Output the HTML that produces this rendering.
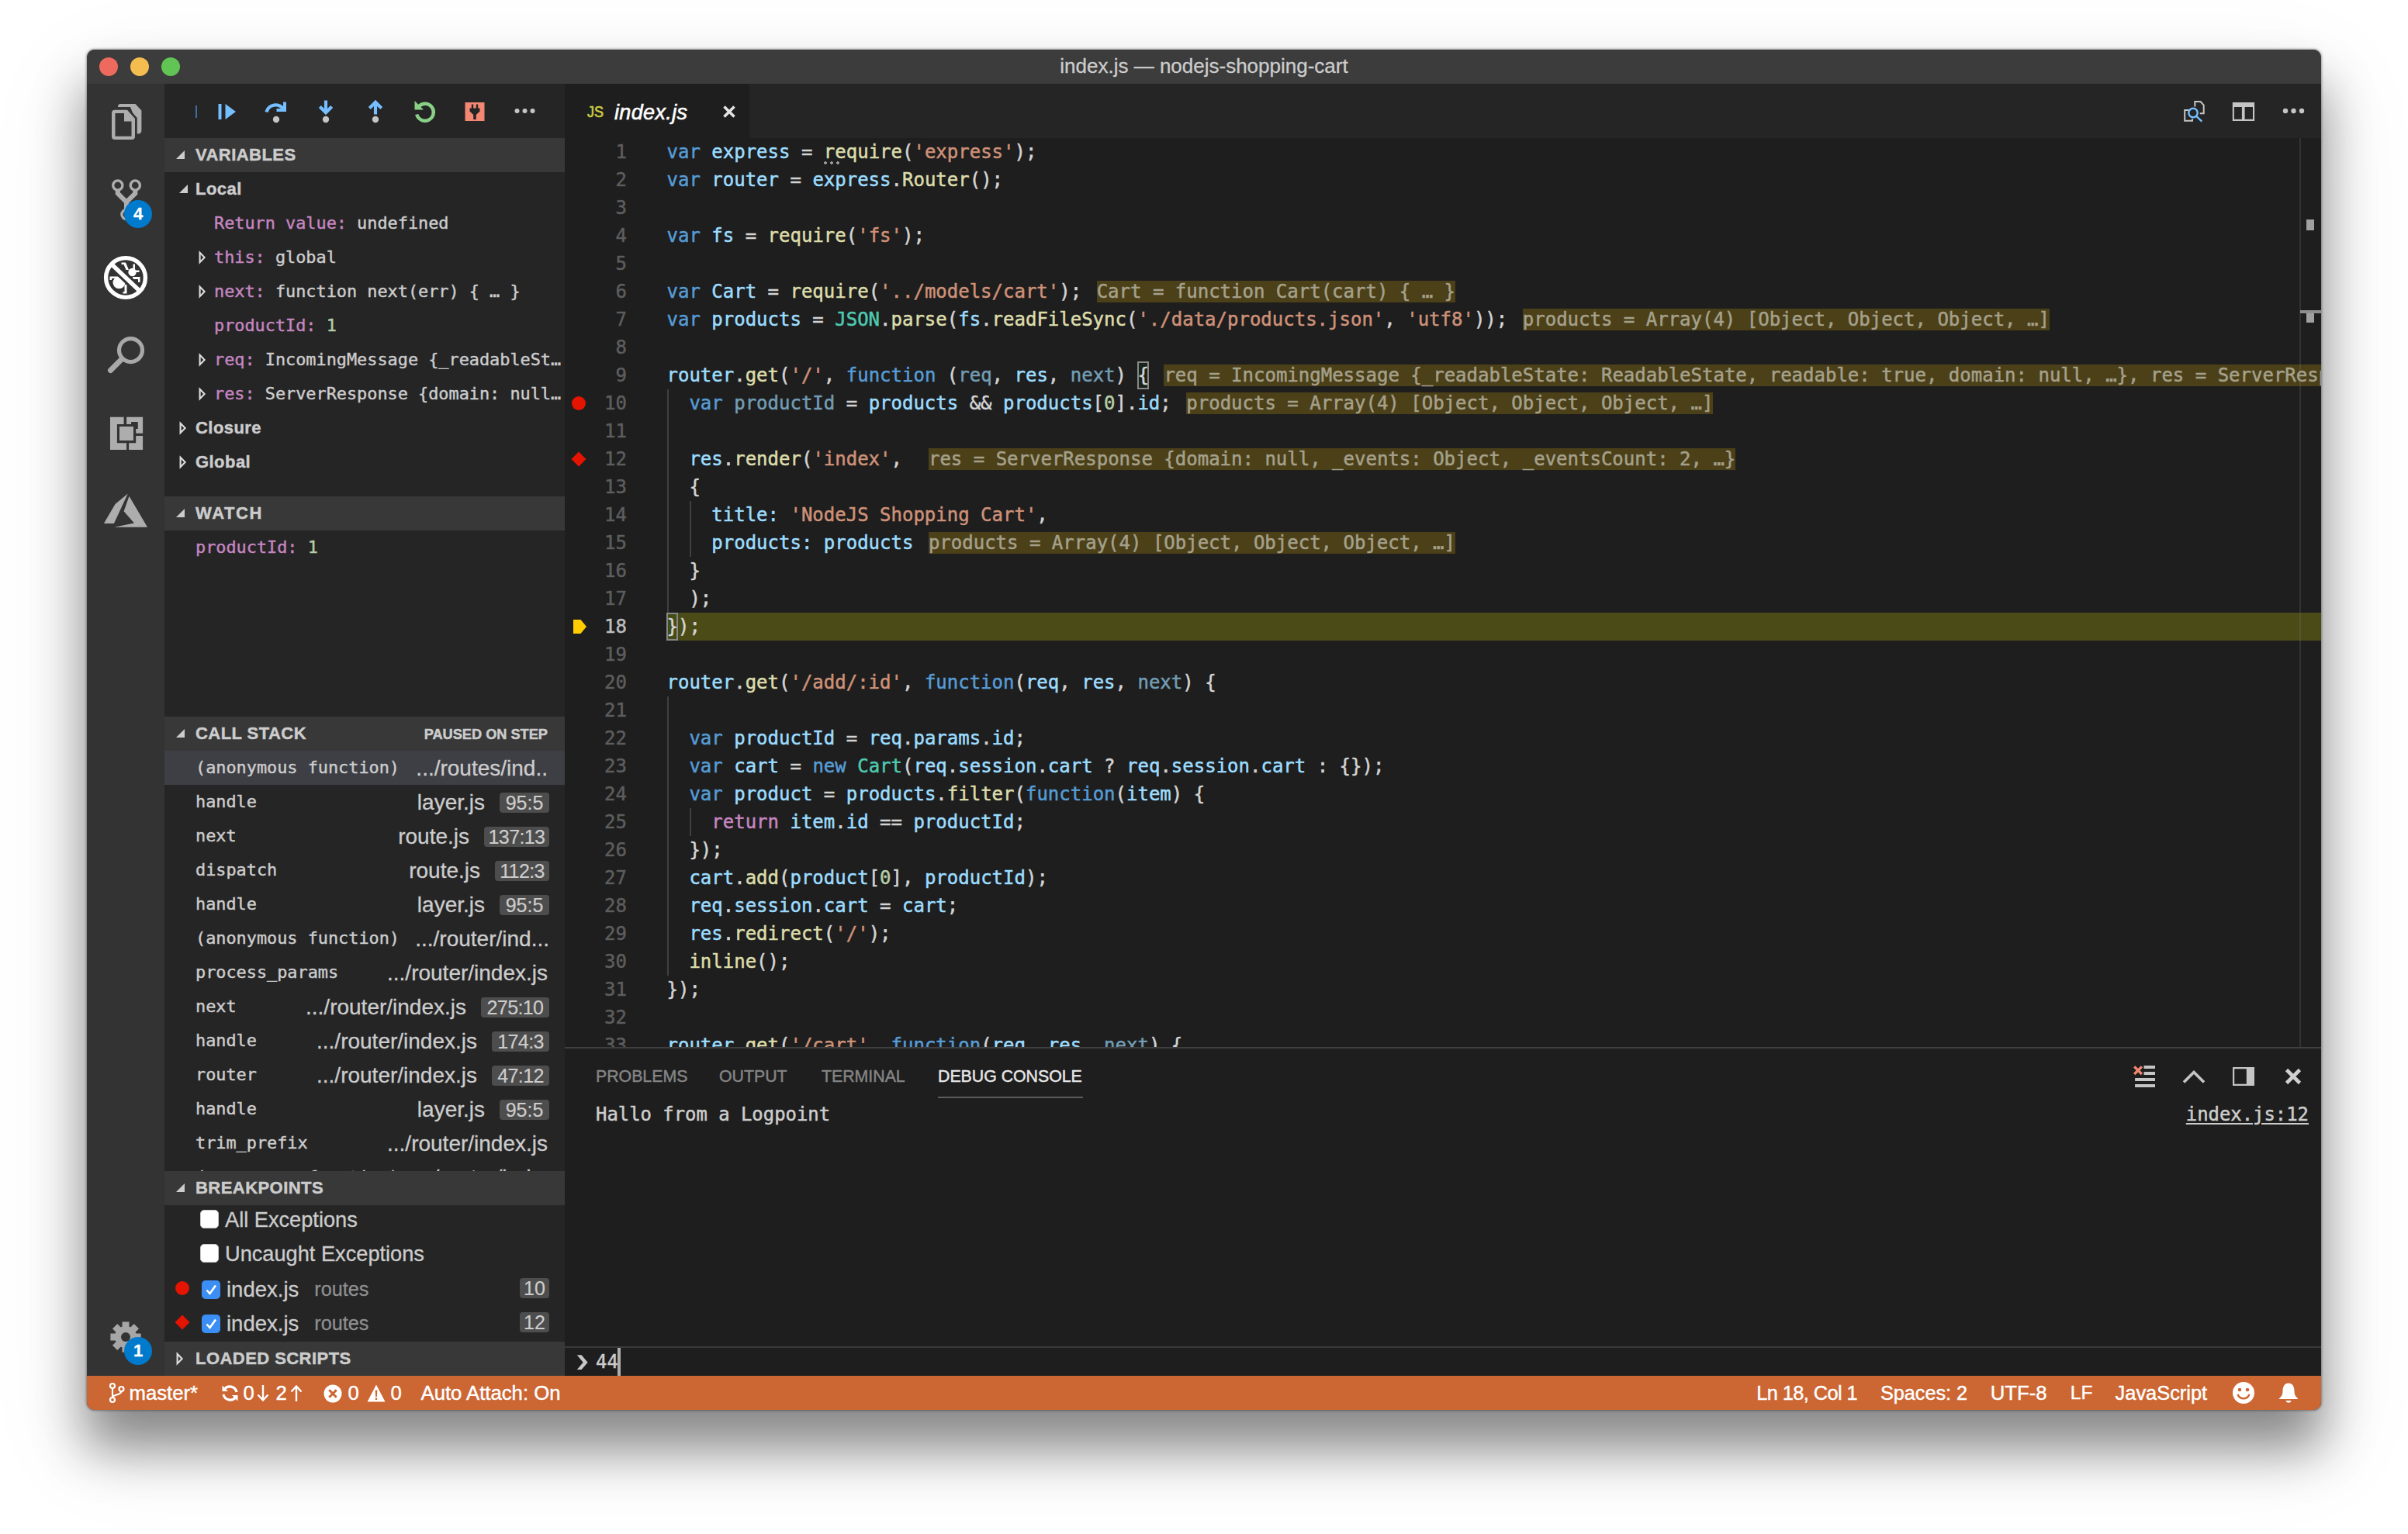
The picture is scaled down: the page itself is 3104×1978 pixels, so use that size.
<!DOCTYPE html>
<html lang="en">
<head>
<meta charset="utf-8">
<title>index.js — nodejs-shopping-cart</title>
<style>
*{box-sizing:border-box;margin:0;padding:0}
html,body{width:3104px;height:1978px;background:#fff;overflow:hidden}
body{position:relative;font-family:"Liberation Sans",sans-serif;color:#ccc;-webkit-text-stroke:.3px}
.win{position:absolute;left:112px;top:64px;width:2880px;height:1754px;border-radius:10px;overflow:hidden;background:#1e1e1e}
.shadow{position:absolute;left:112px;top:64px;width:2880px;height:1754px;border-radius:10px;
 box-shadow:0 48px 66px 2px rgba(0,0,0,.44),0 44px 130px 20px rgba(0,0,0,.06),0 0 3px 1px rgba(0,0,0,.35)}
.abs{position:absolute}
.mono{font-family:"DejaVu Sans Mono","Liberation Mono",monospace;-webkit-text-stroke:.5px}

/* title bar */
.titlebar{position:absolute;left:0;top:0;width:2880px;height:44px;background:#3c3c3c;text-align:center;line-height:43px;font-size:26px;color:#cccccc}
.tl{position:absolute;top:10px;width:24px;height:24px;border-radius:50%}

/* activity bar */
.activity{position:absolute;left:0;top:44px;width:100px;height:1666px;background:#333333}
.activity svg{position:absolute}
.badge{position:absolute;width:36px;height:36px;border-radius:50%;background:#007acc;color:#fff;font-size:22px;font-weight:bold;text-align:center;line-height:36px}

/* sidebar */
.sidebar{position:absolute;left:100px;top:44px;width:516px;height:1666px;background:#252526;overflow:hidden}
.hdr{position:absolute;left:0;width:516px;height:44px;background:#383838;font-size:22px;font-weight:bold;color:#cccccc;line-height:44px;padding-left:40px;letter-spacing:.45px;-webkit-text-stroke:.45px}
.row{position:absolute;left:0;width:516px;height:44px;line-height:44px;white-space:nowrap;overflow:hidden}
.vm{font-family:"DejaVu Sans Mono","Liberation Mono",monospace;font-size:21.85px;color:#cccccc;-webkit-text-stroke:.42px}
.vn{color:#c586c0}
.num{color:#b5cea8}
.scope{font-size:22px;font-weight:bold;color:#cccccc;letter-spacing:.45px;-webkit-text-stroke:.45px}
.tw{position:absolute}
.cs-file{position:absolute;top:0;font-family:"Liberation Sans",sans-serif;font-size:28px;-webkit-text-stroke:.3px;color:#cccccc;line-height:45px;white-space:nowrap}
.cs-badge{position:absolute;font-family:"Liberation Sans",sans-serif;-webkit-text-stroke:.2px;text-align:center;right:20px;top:10px;height:26px;border-radius:4px;background:#4d4d4d;color:#cccccc;font-size:25px;line-height:27px;padding:0 7px}

/* editor */
.tabs{position:absolute;left:616px;top:44px;width:2264px;height:70px;background:#252526}
.tab{position:absolute;left:0;top:0;width:238px;height:70px;background:#1e1e1e}
.editor{position:absolute;left:616px;top:114px;width:2264px;height:1172px;background:#1e1e1e;overflow:hidden}
.ln{position:absolute;left:0;width:80px;text-align:right;height:36px;line-height:36px;font-size:24px;color:#5d5d5d}
.cl{position:absolute;left:131.500px;height:36px;line-height:36px;font-size:24px;white-space:pre;color:#d4d4d4}
.k{color:#569cd6}.v{color:#9cdcfe}.f{color:#dcdcaa}.s{color:#ce9178}.n{color:#b5cea8}.t{color:#4ec9b0}.c{color:#c586c0}.u{color:#729db4}
.iv{margin-left:19.500px;background:#4b4018;color:#a5a08c}
.guide{position:absolute;width:2px;background:#404040}
.bm{position:absolute;width:15px;height:36px;border:2px solid #888;background:rgba(0,100,0,.1)}

/* panel */
.panel{position:absolute;left:616px;top:1286px;width:2264px;height:424px;background:#1e1e1e;border-top:2px solid #3f3f3f}
.ptab{position:absolute;top:0;height:70px;line-height:72px;font-size:21.3px;color:#858585;white-space:nowrap;-webkit-text-stroke:.45px}

/* status bar */
.status{position:absolute;left:0;top:1710px;width:2880px;height:44px;background:#cc6633;color:#fff;font-size:25.7px;line-height:44px;-webkit-text-stroke:.45px;white-space:nowrap}
.status span,.status svg{position:absolute;top:0}
</style>
</head>
<body>
<div class="shadow"></div>
<div class="win">

<!-- TITLE BAR -->
<div class="titlebar">index.js — nodejs-shopping-cart
 <div class="tl" style="left:16px;background:#ee6a5f"></div>
 <div class="tl" style="left:56px;background:#f5bd4f"></div>
 <div class="tl" style="left:96px;background:#61c454"></div>
</div>

<!-- ACTIVITY BAR -->
<div class="activity">
<!-- explorer -->
<svg style="left:26px;top:20px" width="52" height="58" viewBox="26 20 52 58">
 <path d="M43 26 H62.500 L70.400 34.500 V60 Q70.400 64.500 66 64.500 H60 V40 L56 30 H40 Q40 26 43 26 Z" fill="#adadad"/>
 <path d="M36 33.700 H52 L62 45 V68 Q62 72 58 72 H36 Q32 72 32 68 V37.700 Q32 33.700 36 33.700 Z" fill="#333" stroke="#333" stroke-width="5.500"/>
 <path d="M36 33.700 H52 L62 45 V68 Q62 72 58 72 H36 Q32 72 32 68 V37.700 Q32 33.700 36 33.700 Z M36.500 38 V67.700 H57.500 V48.500 H48 V38 Z" fill="#adadad" fill-rule="evenodd"/>
</svg>
<!-- git -->
<svg style="left:26px;top:118px" width="52" height="64" viewBox="26 118 52 64">
 <g fill="none" stroke="#adadad">
 <circle cx="39.800" cy="131" r="6.100" stroke-width="3.400"/>
 <circle cx="62.300" cy="131" r="6.100" stroke-width="3.400"/>
 <circle cx="51" cy="168.500" r="6.100" stroke-width="3.400"/>
 <path d="M39.800 137 V141.500 L51 152.500 L62.300 141.500 V137 M51 152 V162.500" stroke-width="6"/>
 </g>
</svg>
<div class="badge" style="left:48px;top:150px">4</div>
<!-- debug (active) -->
<svg style="left:20px;top:220px" width="60" height="60" viewBox="-30 -30 60 60">
 <g fill="#fff">
  <ellipse cx="-8.500" cy="6.500" rx="8" ry="7.800"/>
  <path d="M-20.500 -1.500 H-9 V1 H-18 V3 H-20.500 Z"/>
  <path d="M-1.500 9 H1.500 V20.500 H-3.500 V18 H-1.500 Z"/>
  <circle cx="8.500" cy="-7" r="5.200"/>
  <path d="M-5.500 -19.500 H0 L4 -10 H0.500 L-2.500 -17 H-5.500 Z"/>
  <path d="M9.500 -17.500 H12 V-11 H9.500 Z M12 -9.500 H17.500 V-7 H12 Z"/>
  <path d="M9 -1 H18.500 V6 H16 V2 H9 Z"/>
 </g>
 <path d="M-20 -19 L20 19" stroke="#333" stroke-width="11.500" />
 <path d="M-20 -19 L20 19" stroke="#fff" stroke-width="5.400"/>
 <circle cx="0" cy="0" r="28.200" fill="none" stroke="#333" stroke-width="4"/>
 <circle cx="0" cy="0" r="25.400" fill="none" stroke="#fff" stroke-width="5.400"/>
</svg>
<!-- search -->
<svg style="left:22px;top:320px" width="58" height="58" viewBox="22 320 58 58">
 <circle cx="56.500" cy="343.600" r="15" fill="none" stroke="#a8a8a8" stroke-width="5.200"/>
 <path d="M45 355 L30.500 369.500" stroke="#a8a8a8" stroke-width="7" stroke-linecap="round"/>
</svg>
<!-- extensions -->
<svg style="left:30px;top:429px" width="43" height="44" viewBox="30 429 43 44">
 <path d="M30 429.700 H47.600 V438.900 H38.900 V463.200 H51.100 V472 H30 Z" fill="#adadad"/>
 <path d="M51.100 429.700 H72.100 V450.800 H63.200 V445 H65.800 V435.900 H57.100 V438.900 H51.100 Z" fill="#adadad"/>
 <path d="M63.200 454.100 H72.100 V472 H54.100 V463.200 H63.200 Z" fill="#adadad"/>
 <rect x="42" y="442" width="18" height="18" fill="#adadad"/>
</svg>
<!-- azure -->
<svg style="left:20px;top:526px" width="60" height="48" viewBox="20 526 60 48">
 <path d="M52.800 528.400 L36.500 542.100 L21.900 566.900 H34.900 Z" fill="#adadad"/>
 <path d="M54.500 531.700 L47.600 551.200 L61 566.600 L35.200 571.800 H78 Z" fill="#adadad"/>
</svg>
<!-- gear -->
<svg style="left:28px;top:1594px" width="44" height="44" viewBox="-22 -22 44 44">
 <g fill="#a6a6a6">
  <circle r="14"/>
  <g id="teeth"><rect x="-4.500" y="-19.600" width="9" height="39.200" /><rect x="-4.500" y="-19.600" width="9" height="39.200" transform="rotate(45)"/><rect x="-4.500" y="-19.600" width="9" height="39.200" transform="rotate(90)"/><rect x="-4.500" y="-19.600" width="9" height="39.200" transform="rotate(135)"/></g>
 </g>
 <circle r="6" fill="#333"/>
</svg>
<div class="badge" style="left:48px;top:1616px">1</div>

</div>

<!-- SIDEBAR -->
<div class="sidebar">
<!-- debug toolbar -->
<div class="abs" style="left:40px;top:28px;width:2px;height:16px;background:#3f6f9f"></div>
<svg class="abs" style="left:64px;top:20px" width="32" height="32" viewBox="0 0 32 32"><path d="M5.5 6 H9.5 V26 H5.5 Z M14.5 6 L28 16 L14.5 26 Z" fill="#75beff"/></svg>
<svg class="abs" style="left:128px;top:20px" width="32" height="32" viewBox="0 0 32 32"><path d="M3.500 16.500 A12 11.500 0 0 1 25.500 13" fill="none" stroke="#75beff" stroke-width="4.400"/><path d="M29 3.500 V16 H16.500 V12 H25 V3.500 Z" fill="#75beff"/><circle cx="16" cy="26" r="4.200" fill="#c5c5c5"/></svg>
<svg class="abs" style="left:192px;top:20px" width="32" height="32" viewBox="0 0 32 32"><path d="M16 1.500 V16 M8.300 9.500 L16 17.200 L23.700 9.500" fill="none" stroke="#75beff" stroke-width="4.200"/><circle cx="16" cy="26" r="4.200" fill="#c5c5c5"/></svg>
<svg class="abs" style="left:256px;top:20px" width="32" height="32" viewBox="0 0 32 32"><path d="M16 19.500 V5 M8.300 11.500 L16 3.800 L23.700 11.500" fill="none" stroke="#75beff" stroke-width="4.200"/><circle cx="16" cy="26" r="4.200" fill="#c5c5c5"/></svg>
<svg class="abs" style="left:320px;top:20px" width="32" height="32" viewBox="0 0 32 32"><path d="M8 9 A11 11 0 1 1 5.200 19.500" fill="none" stroke="#89d185" stroke-width="4.400"/><path d="M2.500 2 V13.500 H14 L10.500 10 L7 6.500 Z" fill="#89d185"/></svg>
<svg class="abs" style="left:384px;top:20px" width="32" height="32" viewBox="0 0 32 32"><rect x="3.500" y="4" width="25" height="24" fill="#f48771"/><path d="M11.800 6.500 h2.400 v5 h3.600 v-5 h2.400 v5 h2.300 v4 l-4.700 4.500 v6 h-3.600 v-6 l-4.700 -4.500 v-4 h2.300 Z" fill="#252526"/></svg>
<svg class="abs" style="left:448px;top:20px" width="32" height="32" viewBox="0 0 32 32"><circle cx="6.500" cy="15" r="3" fill="#c5c5c5"/><circle cx="16.500" cy="15" r="3" fill="#c5c5c5"/><circle cx="26.500" cy="15" r="3" fill="#c5c5c5"/></svg>

<!-- VARIABLES -->
<div class="hdr" style="top:70px"><svg class="tw" style="left:14px;top:15px" width="13" height="13" viewBox="0 0 13 13"><path d="M12 1 V12 H1 Z" fill="#cccccc"/></svg>VARIABLES</div>
<div class="row scope" style="top:114px;padding-left:40px"><svg class="tw" style="left:18px;top:15px" width="13" height="13" viewBox="0 0 13 13"><path d="M12 1 V12 H1 Z" fill="#cccccc"/></svg>Local</div>
<div class="row vm" style="top:158px;padding-left:64px"><span class="vn">Return value:</span> undefined</div>
<div class="row vm" style="top:202px;padding-left:64px"><svg class="tw" style="left:43.600px;top:13px" width="10" height="18" viewBox="0 0 10 18"><path d="M1.600 2.800 L7.600 9 L1.600 15.200 Z" fill="none" stroke="#dddddd" stroke-width="2.100"/></svg><span class="vn">this:</span> global</div>
<div class="row vm" style="top:246px;padding-left:64px"><svg class="tw" style="left:43.600px;top:13px" width="10" height="18" viewBox="0 0 10 18"><path d="M1.600 2.800 L7.600 9 L1.600 15.200 Z" fill="none" stroke="#dddddd" stroke-width="2.100"/></svg><span class="vn">next:</span> function next(err) { … }</div>
<div class="row vm" style="top:290px;padding-left:64px"><span class="vn">productId:</span> <span class="num">1</span></div>
<div class="row vm" style="top:334px;padding-left:64px"><svg class="tw" style="left:43.600px;top:13px" width="10" height="18" viewBox="0 0 10 18"><path d="M1.600 2.800 L7.600 9 L1.600 15.200 Z" fill="none" stroke="#dddddd" stroke-width="2.100"/></svg><span class="vn">req:</span> IncomingMessage {_readableSt…</div>
<div class="row vm" style="top:378px;padding-left:64px"><svg class="tw" style="left:43.600px;top:13px" width="10" height="18" viewBox="0 0 10 18"><path d="M1.600 2.800 L7.600 9 L1.600 15.200 Z" fill="none" stroke="#dddddd" stroke-width="2.100"/></svg><span class="vn">res:</span> ServerResponse {domain: null…</div>
<div class="row scope" style="top:422px;padding-left:40px"><svg class="tw" style="left:19.300px;top:13px" width="10" height="18" viewBox="0 0 10 18"><path d="M1.600 2.800 L7.600 9 L1.600 15.200 Z" fill="none" stroke="#dddddd" stroke-width="2.100"/></svg>Closure</div>
<div class="row scope" style="top:466px;padding-left:40px"><svg class="tw" style="left:19.300px;top:13px" width="10" height="18" viewBox="0 0 10 18"><path d="M1.600 2.800 L7.600 9 L1.600 15.200 Z" fill="none" stroke="#dddddd" stroke-width="2.100"/></svg>Global</div>

<!-- WATCH -->
<div class="hdr" style="top:532px"><svg class="tw" style="left:14px;top:15px" width="13" height="13" viewBox="0 0 13 13"><path d="M12 1 V12 H1 Z" fill="#cccccc"/></svg><span style="letter-spacing:1.600px">WATCH</span></div>
<div class="row vm" style="top:576px;padding-left:40px"><span class="vn">productId:</span> <span class="num">1</span></div>

<!-- CALL STACK -->
<div class="hdr" style="top:816px"><svg class="tw" style="left:14px;top:15px" width="13" height="13" viewBox="0 0 13 13"><path d="M12 1 V12 H1 Z" fill="#cccccc"/></svg>CALL STACK<span class="abs" style="right:22px;top:1px;font-size:18.2px;letter-spacing:0">PAUSED ON STEP</span></div>
<div class="row vm" style="top:860px;padding-left:40px;background:#3e3f45">(anonymous function)<span class="cs-file" style="right:22px">.../routes/ind..</span></div>
<div class="row vm" style="top:904px;padding-left:40px">handle<span class="cs-file" style="right:103px">layer.js</span><span class="cs-badge" style="width:64px;padding:0">95:5</span></div>
<div class="row vm" style="top:948px;padding-left:40px">next<span class="cs-file" style="right:123px">route.js</span><span class="cs-badge" style="width:84px;padding:0;letter-spacing:-.6px">137:13</span></div>
<div class="row vm" style="top:992px;padding-left:40px">dispatch<span class="cs-file" style="right:109px">route.js</span><span class="cs-badge" style="width:70px;padding:0;letter-spacing:-.6px">112:3</span></div>
<div class="row vm" style="top:1036px;padding-left:40px">handle<span class="cs-file" style="right:103px">layer.js</span><span class="cs-badge" style="width:64px;padding:0">95:5</span></div>
<div class="row vm" style="top:1080px;padding-left:40px">(anonymous function)<span class="cs-file" style="right:20px">.../router/ind...</span></div>
<div class="row vm" style="top:1124px;padding-left:40px">process_params<span class="cs-file" style="right:22px">.../router/index.js</span></div>
<div class="row vm" style="top:1168px;padding-left:40px">next<span class="cs-file" style="right:127px">.../router/index.js</span><span class="cs-badge" style="width:88px;padding:0;letter-spacing:-.6px">275:10</span></div>
<div class="row vm" style="top:1212px;padding-left:40px">handle<span class="cs-file" style="right:113px">.../router/index.js</span><span class="cs-badge" style="width:74px;padding:0;letter-spacing:-.6px">174:3</span></div>
<div class="row vm" style="top:1256px;padding-left:40px">router<span class="cs-file" style="right:113px">.../router/index.js</span><span class="cs-badge" style="width:74px;padding:0;letter-spacing:-.6px">47:12</span></div>
<div class="row vm" style="top:1300px;padding-left:40px">handle<span class="cs-file" style="right:103px">layer.js</span><span class="cs-badge" style="width:64px;padding:0">95:5</span></div>
<div class="row vm" style="top:1344px;padding-left:40px">trim_prefix<span class="cs-file" style="right:22px">.../router/index.js</span></div>
<div class="row vm" style="top:1388px;padding-left:40px">(anonymous function)<span class="cs-file" style="right:20px">.../router/ind...</span></div>

<!-- BREAKPOINTS -->
<div class="hdr" style="top:1402px"><svg class="tw" style="left:14px;top:15px" width="13" height="13" viewBox="0 0 13 13"><path d="M12 1 V12 H1 Z" fill="#cccccc"/></svg>BREAKPOINTS</div>
<div class="abs" style="left:0;top:1446px;width:516px;height:176px;background:#252526"></div>
<div class="row" style="top:1446px;padding-left:78px;font-size:27.2px;color:#cccccc;line-height:38px"><span class="abs" style="left:46px;top:6px;width:24px;height:24px;border-radius:5px;background:#fff;border:1px solid #c8c8c8"></span>All Exceptions</div>
<div class="row" style="top:1490px;padding-left:78px;font-size:27.2px;color:#cccccc;line-height:38px"><span class="abs" style="left:46px;top:6px;width:24px;height:24px;border-radius:5px;background:#fff;border:1px solid #c8c8c8"></span>Uncaught Exceptions</div>
<div class="row" style="top:1534px;padding-left:80px;font-size:27.5px;color:#cccccc;line-height:41px"><span class="abs" style="left:14px;top:10px;width:18px;height:18px;border-radius:50%;background:#e51400"></span><svg class="abs" style="left:48px;top:8.5px" width="24" height="24" viewBox="0 0 24 24"><rect width="24" height="24" rx="5" fill="#3b8ef3"/><path d="M6.500 12.500 L10.500 17 L18 6.500" fill="none" stroke="#fff" stroke-width="2.600"/></svg>index.js<span style="font-size:25.2px;color:#8f8f8f;margin-left:20px;position:relative;top:-1.5px">routes</span><span class="cs-badge" style="top:6px;width:38px;padding:0;line-height:27px">10</span></div>
<div class="row" style="top:1578px;padding-left:80px;font-size:27.5px;color:#cccccc;line-height:41px"><svg class="abs" style="left:13px;top:9px" width="20" height="20" viewBox="0 0 20 20"><path d="M10 0.5 L19.500 10 L10 19.500 L0.500 10 Z" fill="#e51400"/></svg><svg class="abs" style="left:48px;top:8.5px" width="24" height="24" viewBox="0 0 24 24"><rect width="24" height="24" rx="5" fill="#3b8ef3"/><path d="M6.500 12.500 L10.500 17 L18 6.500" fill="none" stroke="#fff" stroke-width="2.600"/></svg>index.js<span style="font-size:25.2px;color:#8f8f8f;margin-left:20px;position:relative;top:-1.5px">routes</span><span class="cs-badge" style="top:6px;width:38px;padding:0;line-height:27px">12</span></div>

<!-- LOADED SCRIPTS -->
<div class="hdr" style="top:1622px"><svg class="tw" style="left:15px;top:13px" width="10" height="18" viewBox="0 0 10 18"><path d="M1.600 2.800 L7.600 9 L1.600 15.200 Z" fill="none" stroke="#dddddd" stroke-width="2.100"/></svg>LOADED SCRIPTS</div>

</div>

<!-- TABS -->
<div class="tabs">
<div class="tab">
  <span class="abs" style="left:29px;top:0;line-height:73px;font-size:20px;font-weight:normal;-webkit-text-stroke:.7px;color:#cbcb41;transform:scaleX(.9);transform-origin:left">JS</span>
 <span class="abs" style="left:64px;top:0;line-height:74px;font-size:27px;font-style:italic;color:#ffffff;letter-spacing:.35px;-webkit-text-stroke:.55px">index.js</span>
 <svg class="abs" style="left:202px;top:26px" width="20" height="20" viewBox="0 0 20 20"><path d="M3.500 3.500 L16.500 16.500 M16.500 3.500 L3.500 16.500" stroke="#e4e4e4" stroke-width="3.600"/></svg>
</div>
<!-- editor actions -->
<svg class="abs" style="left:2084px;top:20px" width="32" height="32" viewBox="0 0 32 32">
 <path d="M17.300 9.400 V3.100 H24.600 L28.700 7.600 V18.300 H23.700" fill="none" stroke="#c5c5c5" stroke-width="2"/>
 <path d="M11.300 14.100 H4.200 V27.700 H14 V25.300" fill="none" stroke="#c5c5c5" stroke-width="2"/>
 <circle cx="15" cy="17.500" r="5.700" fill="none" stroke="#75beff" stroke-width="2.400"/>
 <path d="M19.300 21.800 L26.300 28.700" stroke="#75beff" stroke-width="2.400"/>
</svg>
<svg class="abs" style="left:2149px;top:24px" width="30" height="26" viewBox="0 0 30 26"><path d="M0.800 0.100 H29.100 V24 H0.800 Z M2.900 6 V21.800 H12.900 V6 Z M16.600 6 V21.800 H27 V6 Z" fill="#c5c5c5" fill-rule="evenodd"/></svg>
<svg class="abs" style="left:2214px;top:30px" width="30" height="10" viewBox="0 0 30 10"><circle cx="4" cy="5" r="3.200" fill="#c5c5c5"/><circle cx="14.500" cy="5" r="3.200" fill="#c5c5c5"/><circle cx="25" cy="5" r="3.200" fill="#c5c5c5"/></svg>

</div>

<!-- EDITOR -->
<div class="editor mono">
<!-- current line highlight -->
<div class="abs" style="left:132px;top:612px;width:2132px;height:36px;background:#4b4b18"></div>
<!-- indent guides -->
<div class="guide" style="left:132px;top:324px;height:288px"></div>
<div class="guide" style="left:161px;top:468px;height:72px"></div>
<div class="guide" style="left:132px;top:720px;height:360px"></div>
<div class="guide" style="left:161px;top:864px;height:36px"></div>
<!-- bracket match -->
<div class="bm" style="left:738px;top:288px"></div>
<div class="bm" style="left:131px;top:612px"></div>
<!-- glyph margin -->
<div class="abs" style="left:9px;top:333px;width:18px;height:18px;border-radius:50%;background:#e51400"></div>
<svg class="abs" style="left:8px;top:404px" width="20" height="20" viewBox="0 0 20 20"><path d="M10 0.5 L19.5 10 L10 19.5 L0.5 10 Z" fill="#e51400"/></svg>
<svg class="abs" style="left:10px;top:621px" width="19" height="18" viewBox="0 0 19 18"><path d="M1 0 H10.500 L18 9 L10.500 18 H1 Z" fill="#ffcc00"/></svg>
<!-- lightbulb hint dots under require -->
<div class="abs" style="left:334px;top:30px;width:22px;height:4px;background:radial-gradient(circle 1.7px at 2px 2px,#9a9a9a 98%,transparent) 0 0/8px 4px repeat-x"></div>
<!-- line numbers -->
<div class="ln" style="top:0">1</div>
<div class="ln" style="top:36px">2</div>
<div class="ln" style="top:72px">3</div>
<div class="ln" style="top:108px">4</div>
<div class="ln" style="top:144px">5</div>
<div class="ln" style="top:180px">6</div>
<div class="ln" style="top:216px">7</div>
<div class="ln" style="top:252px">8</div>
<div class="ln" style="top:288px">9</div>
<div class="ln" style="top:324px">10</div>
<div class="ln" style="top:360px">11</div>
<div class="ln" style="top:396px">12</div>
<div class="ln" style="top:432px">13</div>
<div class="ln" style="top:468px">14</div>
<div class="ln" style="top:504px">15</div>
<div class="ln" style="top:540px">16</div>
<div class="ln" style="top:576px">17</div>
<div class="ln" style="top:612px;color:#bdbdbd">18</div>
<div class="ln" style="top:648px">19</div>
<div class="ln" style="top:684px">20</div>
<div class="ln" style="top:720px">21</div>
<div class="ln" style="top:756px">22</div>
<div class="ln" style="top:792px">23</div>
<div class="ln" style="top:828px">24</div>
<div class="ln" style="top:864px">25</div>
<div class="ln" style="top:900px">26</div>
<div class="ln" style="top:936px">27</div>
<div class="ln" style="top:972px">28</div>
<div class="ln" style="top:1008px">29</div>
<div class="ln" style="top:1044px">30</div>
<div class="ln" style="top:1080px">31</div>
<div class="ln" style="top:1116px">32</div>
<div class="ln" style="top:1152px">33</div>
<!-- code -->
<div class="cl" style="top:0"><span class="k">var</span> <span class="v">express</span> = <span class="f">require</span>(<span class="s">'express'</span>);</div>
<div class="cl" style="top:36px"><span class="k">var</span> <span class="v">router</span> = <span class="v">express</span>.<span class="f">Router</span>();</div>
<div class="cl" style="top:108px"><span class="k">var</span> <span class="v">fs</span> = <span class="f">require</span>(<span class="s">'fs'</span>);</div>
<div class="cl" style="top:180px"><span class="k">var</span> <span class="v">Cart</span> = <span class="f">require</span>(<span class="s">'../models/cart'</span>);<span class="iv">Cart = function Cart(cart) { … }</span></div>
<div class="cl" style="top:216px"><span class="k">var</span> <span class="v">products</span> = <span class="t">JSON</span>.<span class="f">parse</span>(<span class="v">fs</span>.<span class="f">readFileSync</span>(<span class="s">'./data/products.json'</span>, <span class="s">'utf8'</span>));<span class="iv">products = Array(4) [Object, Object, Object, …]</span></div>
<div class="cl" style="top:288px"><span class="v">router</span>.<span class="f">get</span>(<span class="s">'/'</span>, <span class="k">function</span> (<span class="u">req</span>, <span class="v">res</span>, <span class="u">next</span>) {<span class="iv">req = IncomingMessage {_readableState: ReadableState, readable: true, domain: null, …}, res = ServerResponse {domain: null, _events: Object, _eventsCount: 2, …}</span></div>
<div class="cl" style="top:324px">  <span class="k">var</span> <span class="u">productId</span> = <span class="v">products</span> &amp;&amp; <span class="v">products</span>[<span class="n">0</span>].<span class="v">id</span>;<span class="iv">products = Array(4) [Object, Object, Object, …]</span></div>
<div class="cl" style="top:396px">  <span class="v">res</span>.<span class="f">render</span>(<span class="s">'index'</span>, <span class="iv">res = ServerResponse {domain: null, _events: Object, _eventsCount: 2, …}</span></div>
<div class="cl" style="top:432px">  {</div>
<div class="cl" style="top:468px">    <span class="v">title</span><span class="v">:</span> <span class="s">'NodeJS Shopping Cart'</span>,</div>
<div class="cl" style="top:504px">    <span class="v">products</span><span class="v">:</span> <span class="v">products</span><span class="iv">products = Array(4) [Object, Object, Object, …]</span></div>
<div class="cl" style="top:540px">  }</div>
<div class="cl" style="top:576px">  );</div>
<div class="cl" style="top:612px">});</div>
<div class="cl" style="top:684px"><span class="v">router</span>.<span class="f">get</span>(<span class="s">'/add/:id'</span>, <span class="k">function</span>(<span class="v">req</span>, <span class="v">res</span>, <span class="u">next</span>) {</div>
<div class="cl" style="top:756px">  <span class="k">var</span> <span class="v">productId</span> = <span class="v">req</span>.<span class="v">params</span>.<span class="v">id</span>;</div>
<div class="cl" style="top:792px">  <span class="k">var</span> <span class="v">cart</span> = <span class="k">new</span> <span class="t">Cart</span>(<span class="v">req</span>.<span class="v">session</span>.<span class="v">cart</span> ? <span class="v">req</span>.<span class="v">session</span>.<span class="v">cart</span> : {});</div>
<div class="cl" style="top:828px">  <span class="k">var</span> <span class="v">product</span> = <span class="v">products</span>.<span class="f">filter</span>(<span class="k">function</span>(<span class="v">item</span>) {</div>
<div class="cl" style="top:864px">    <span class="c">return</span> <span class="v">item</span>.<span class="v">id</span> == <span class="v">productId</span>;</div>
<div class="cl" style="top:900px">  });</div>
<div class="cl" style="top:936px">  <span class="v">cart</span>.<span class="f">add</span>(<span class="v">product</span>[<span class="n">0</span>], <span class="v">productId</span>);</div>
<div class="cl" style="top:972px">  <span class="v">req</span>.<span class="v">session</span>.<span class="v">cart</span> = <span class="v">cart</span>;</div>
<div class="cl" style="top:1008px">  <span class="v">res</span>.<span class="f">redirect</span>(<span class="s">'/'</span>);</div>
<div class="cl" style="top:1044px">  <span class="f">inline</span>();</div>
<div class="cl" style="top:1080px">});</div>
<div class="cl" style="top:1152px"><span class="v">router</span>.<span class="f">get</span>(<span class="s">'/cart'</span>, <span class="k">function</span>(<span class="v">req</span>, <span class="v">res</span>, <span class="u">next</span>) {</div>
<!-- overview ruler -->
<div class="abs" style="left:2236px;top:0;width:2px;height:1172px;background:rgba(127,127,127,.22)"></div>
<div class="abs" style="left:2245px;top:105px;width:10px;height:14px;background:#a0a0a0"></div>
<div class="abs" style="left:2237px;top:222px;width:27px;height:4px;background:#8e8e8e"></div>
<div class="abs" style="left:2245px;top:226px;width:10px;height:12px;background:#a0a0a0"></div>

</div>

<!-- PANEL -->
<div class="panel">
<span class="ptab" style="left:40px">PROBLEMS</span>
<span class="ptab" style="left:199px">OUTPUT</span>
<span class="ptab" style="left:331px">TERMINAL</span>
<span class="ptab" style="left:481px;color:#e7e7e7">DEBUG CONSOLE</span>
<div class="abs" style="left:481px;top:62px;width:187px;height:2px;background:#5c5c5c"></div>
<!-- panel actions -->
<svg class="abs" style="left:2019px;top:18px" width="34" height="34" viewBox="0 0 34 34">
 <path d="M4.200 5.400 L13.900 15 M13.900 5.400 L4.200 15" stroke="#f48771" stroke-width="3.300"/>
 <path d="M16.500 4 H31 V8.100 H16.500 Z M16.500 12.100 H31 V16 H16.500 Z M5.100 20 H31 V24 H5.100 Z M5.100 28 H31 V32 H5.100 Z" fill="#c5c5c5"/>
</svg>
<svg class="abs" style="left:2084px;top:23px" width="32" height="24" viewBox="0 0 32 24"><path d="M3 20.500 L16 7.500 L29 20.500" fill="none" stroke="#c5c5c5" stroke-width="3.600"/></svg>
<svg class="abs" style="left:2150px;top:24px" width="28" height="24" viewBox="0 0 28 24"><path d="M0 0 H28 V24 H0 Z M2.200 2.300 V21.800 H17.800 V2.300 Z" fill="#c5c5c5" fill-rule="evenodd"/></svg>
<svg class="abs" style="left:2216px;top:24px" width="24" height="24" viewBox="0 0 24 24"><path d="M3.500 3.500 L20.500 20.500 M20.500 3.500 L3.500 20.500" stroke="#d0d0d0" stroke-width="4.600"/></svg>
<!-- console output -->
<div class="abs mono" style="left:40px;top:66px;height:38px;line-height:38px;font-size:23.9px;color:#cccccc;white-space:pre">Hallo from a Logpoint</div>
<div class="abs mono" style="right:16px;top:66px;height:38px;line-height:38px;font-size:23.9px;color:#cccccc;text-decoration:underline;text-underline-offset:3px">index.js:12</div>
<!-- input -->
<div class="abs" style="left:0;top:384px;width:2264px;height:2px;background:#3a3a3a"></div>
<svg class="abs" style="left:14px;top:393px" width="18" height="24" viewBox="0 0 18 24"><path d="M1.800 2.300 H7.600 L15.600 11.800 L7.600 21.100 H1.800 L9.700 11.800 Z" fill="#c8c8c8"/></svg>
<div class="abs mono" style="left:40px;top:386px;height:36px;line-height:36px;font-size:23.9px;color:#cccccc">44</div>
<div class="abs" style="left:68px;top:386px;width:4px;height:36px;background:#aeafad"></div>

</div>

<!-- STATUS BAR -->
<div class="status">
<svg style="left:28px;top:8px" width="22" height="28" viewBox="0 0 22 28"><g fill="none" stroke="#fff" stroke-width="2.200"><circle cx="5" cy="5" r="3"/><circle cx="5" cy="23" r="3"/><circle cx="16.500" cy="9" r="3"/><path d="M5 8 V20 M16.500 12 C16.500 17 5 16 5 20"/></g></svg>
<span style="left:54.500px">master*</span>
<svg style="left:172px;top:10px" width="25" height="25" viewBox="0 0 25 25"><g fill="none" stroke="#fff" stroke-width="3.200"><path d="M21 11 A9 9 0 0 0 5 7.500"/><path d="M4 14 A9 9 0 0 0 20 17.500"/></g><path d="M2.500 2.500 V10 H10 Z M22.500 22.500 V15 H15 Z" fill="#fff"/></svg>
<span style="left:201.500px">0</span>
<svg style="left:219px;top:10px" width="16" height="25" viewBox="0 0 16 25"><path d="M8 2 V21 M1.500 14.500 L8 21.500 L14.500 14.500" fill="none" stroke="#fff" stroke-width="2.400"/></svg>
<span style="left:243.500px">2</span>
<svg style="left:262px;top:10px" width="16" height="25" viewBox="0 0 16 25"><path d="M8 23 V4 M1.500 10.500 L8 3.500 L14.500 10.500" fill="none" stroke="#fff" stroke-width="2.400"/></svg>
<svg style="left:305px;top:11px" width="24" height="24" viewBox="0 0 24 24"><circle cx="12" cy="12" r="11.500" fill="#fff"/><path d="M7.300 7.300 L16.700 16.700 M16.700 7.300 L7.300 16.700" stroke="#cc6633" stroke-width="3"/></svg>
<span style="left:336.500px">0</span>
<svg style="left:361px;top:11px" width="24" height="23" viewBox="0 0 24 23"><path d="M12 0.500 L23.500 22.500 H0.500 Z" fill="#fff"/><path d="M10.700 7.500 H13.300 L12.900 16 H11.100 Z M10.800 17.500 H13.200 V20 H10.800 Z" fill="#cc6633"/></svg>
<span style="left:391.500px">0</span>
<span style="left:430.500px">Auto Attach: On</span>
<span style="right:598px;font-size:25.3px;letter-spacing:-.55px">Ln 18, Col 1</span>
<span style="left:2312px;font-size:25.2px">Spaces: 2</span>
<span style="left:2453.800px">UTF-8</span>
<span style="left:2556.800px;font-size:24.5px">LF</span>
<span style="left:2614.600px;font-size:25.4px">JavaScript</span>
<svg style="left:2765px;top:7px" width="30" height="30" viewBox="0 0 30 30"><circle cx="15" cy="15" r="14" fill="#fff"/><circle cx="10" cy="11" r="2.300" fill="#cc6633"/><circle cx="20" cy="11" r="2.300" fill="#cc6633"/><path d="M7.500 17 A8 8 0 0 0 22.500 17" fill="none" stroke="#cc6633" stroke-width="2.400"/><path d="M9.500 18.500 A6.500 6.500 0 0 0 20.500 18.500 Z" fill="#fff" opacity="0"/></svg>
<svg style="left:2824px;top:8px" width="28" height="29" viewBox="0 0 28 29"><path d="M14 1.500 C8 1.500 6.500 7 6.500 12 C6.500 18 3.500 19.500 1.500 22 H26.500 C24.500 19.500 21.500 18 21.500 12 C21.500 7 20 1.500 14 1.500 Z" fill="#fff"/><path d="M10.500 24 A3.600 3.600 0 0 0 17.500 24 Z" fill="#fff"/></svg>

</div>

</div>
</body>
</html>
